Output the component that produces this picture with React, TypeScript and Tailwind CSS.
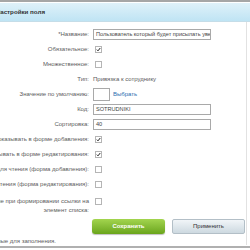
import type { ReactNode } from "react";

const font = { fontFamily: '"Liberation Sans", Arial, sans-serif' };

const Check = ({ checked }: { checked?: boolean }) => (
  <span className="flex h-[7px] w-[7px] items-center justify-center border border-[#b5b5b5] bg-white">
    {checked && (
      <svg viewBox="0 0 8 8" className="h-[7px] w-[7px]">
        <path d="M1.3 4.2 L3.2 6.1 L6.8 1.6" fill="none" stroke="#222" strokeWidth="1.6" />
      </svg>
    )}
  </span>
);

const Row = ({ label, children, h = "h-[15px]" }: { label: ReactNode; children: ReactNode; h?: string }) => (
  <div className={`flex items-center ${h}`}>
    <div className="flex w-[90px] shrink-0 justify-end pr-[1px] text-[#5c5c5c]">
      <span className="whitespace-nowrap">{label}</span>
    </div>
    <div className="flex items-center gap-[3px] pl-[3px] text-[#5c5c5c]">{children}</div>
  </div>
);

const Field = ({ value, w = "w-[118px]" }: { value?: string; w?: string }) => (
  <div className={`flex h-[11px] ${w} items-center overflow-hidden whitespace-nowrap border border-[#a9a9a9] bg-white px-[2px] text-[5.6px] text-[#444]`}>
    {value}
  </div>
);

export default function App() {
  return (
    <div className="h-[250px] w-[250px] overflow-hidden bg-white text-[6px]" style={font}>
      <div className="h-[2px] bg-[#a6a6a6]" />
      <div className="h-[1px] bg-white" />
      <div className="flex h-[19px] items-center border-b border-[#c5dde8] bg-gradient-to-b from-[#dff1f9] to-[#bfe4f4]">
        <div className="flex w-[45px] justify-end">
          <span className="whitespace-nowrap text-[6.2px] font-bold text-[#333]">Настройки поля</span>
        </div>
      </div>
      <div className="mr-[3px] border-r border-[#e2e2e2] pt-[4px]">
        <Row label="*Название:" h="h-[16px]">
          <Field value="Пользователь который будет присылать уведомления" />
        </Row>
        <Row label="Обязательное:">
          <span className="ml-[2px]"><Check checked /></span>
        </Row>
        <Row label="Множественное:">
          <span className="ml-[2px]"><Check /></span>
        </Row>
        <Row label="Тип:">
          <span className="whitespace-nowrap">Привязка к сотруднику</span>
        </Row>
        <Row label="Значение по умолчанию:">
          <div className="h-[13px] w-[17px] border border-[#a9a9a9] bg-white" />
          <span className="text-[#2a6db0]">Выбрать</span>
        </Row>
        <Row label="Код:">
          <Field value="SOTRUDNIKI" />
        </Row>
        <Row label="Сортировка:">
          <Field value="40" />
        </Row>
        <Row label="Показывать в форме добавления:">
          <span className="ml-[2px]"><Check checked /></span>
        </Row>
        <Row label="Показывать в форме редактирования:">
          <span className="ml-[2px]"><Check checked /></span>
        </Row>
        <Row label="Только для чтения (форма добавления):">
          <span className="ml-[2px]"><Check /></span>
        </Row>
        <Row label="Только для чтения (форма редактирования):">
          <span className="ml-[2px]"><Check /></span>
        </Row>
        <div className="flex h-[24px] items-start pt-[5px]">
          <div className="flex w-[90px] shrink-0 flex-col items-end pr-[1px] leading-[9px] text-[#5c5c5c]">
            <span className="whitespace-nowrap">Выводить поле при формировании ссылки на</span>
            <span className="whitespace-nowrap">элемент списка:</span>
          </div>
          <div className="pl-[5px] pt-[1px]">
            <Check />
          </div>
        </div>
        <div className="flex h-[21px] items-start gap-[7px] pl-[92px] pt-[3px]">
          <button className="h-[15px] w-[73px] rounded-[3px] bg-gradient-to-b from-[#a3d54e] to-[#6aa51a] text-[6px] font-bold text-white shadow-[0_1px_1px_rgba(0,0,0,0.25)]">
            Сохранить
          </button>
          <button className="h-[15px] w-[73px] rounded-[2px] border border-[#b3bfc7] bg-gradient-to-b from-[#f1f5f8] to-[#cdd9e0] text-[6px] text-[#333]">
            Применить
          </button>
        </div>
        <div className="flex h-[8px] w-[56px] items-center justify-end">
          <span className="whitespace-nowrap text-[#5c5c5c]">* Поля, обязательные для заполнения.</span>
        </div>
      </div>
      <div className="mt-[1px] h-[2px] bg-[#b0b0b0]" />
    </div>
  );
}
